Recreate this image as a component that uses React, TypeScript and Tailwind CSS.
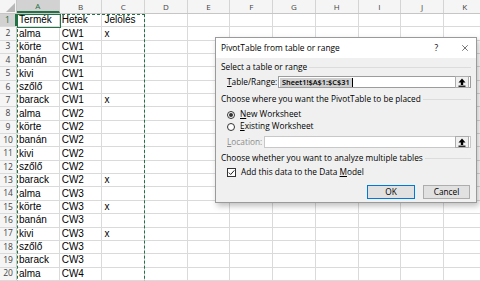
import { X } from "lucide-react";

const cols = ["A", "B", "C", "D", "E", "F", "G", "H", "I", "J", "K"];

const rows: [string, string, string][] = [
  ["Termék", "Hetek", "Jelölés"],
  ["alma", "CW1", "x"],
  ["körte", "CW1", ""],
  ["banán", "CW1", ""],
  ["kivi", "CW1", ""],
  ["szőlő", "CW1", ""],
  ["barack", "CW1", "x"],
  ["alma", "CW2", ""],
  ["körte", "CW2", ""],
  ["banán", "CW2", ""],
  ["kivi", "CW2", ""],
  ["szőlő", "CW2", ""],
  ["barack", "CW2", "x"],
  ["alma", "CW3", ""],
  ["körte", "CW3", "x"],
  ["banán", "CW3", ""],
  ["kivi", "CW3", "x"],
  ["szőlő", "CW3", ""],
  ["barack", "CW3", ""],
  ["alma", "CW4", ""],
];

function UpArrowButton() {
  return (
    <div className="w-[14px] h-[12px] border border-[#adadad] bg-[#f0f0f0] flex items-center justify-center">
      <svg width="8" height="9" viewBox="0 0 8 9">
        <path d="M4 0.5 L7.5 4.5 L5.2 4.5 L5.2 7 L2.8 7 L2.8 4.5 L0.5 4.5 Z" fill="#000" />
        <rect x="0.5" y="7.6" width="7" height="1.2" fill="#000" />
      </svg>
    </div>
  );
}

function Dialog() {
  return (
    <div className="absolute left-[215px] top-[37px] w-[262px] h-[166px] border border-[#9a9a9a] bg-[#f0f0f0] shadow-[2px_3px_6px_rgba(0,0,0,0.25)] font-['Open_Sans',sans-serif] text-[8.3px] text-black flex flex-col">
      <div className="h-[20px] bg-white flex items-center pl-[5px] pr-[6px] shrink-0">
        <span className="text-[8.4px]">PivotTable from table or range</span>
        <span className="ml-auto text-[8.4px] mr-[22px]">?</span>
        <X className="w-[10px] h-[10px]" strokeWidth={1.3} />
      </div>
      <div className="flex flex-col px-[5px] pt-[4px]">
        <div className="flex items-center gap-[2px] h-[10px]">
          <span>Select a table or range</span>
          <div className="flex-1 h-px bg-[#dcdcdc]" />
        </div>
        <div className="flex items-center mt-[4px] pl-[6px] h-[12px]">
          <span className="w-[51px]"><u>T</u>able/Range:</span>
          <div className="flex-1 h-[12px] bg-white border border-[#9c9c9c] flex items-center pl-[1px] pr-[1px]">
            <span className="bg-[#cfcfcf] px-[2px] font-semibold text-[7.4px] leading-[9px]">Sheet1!$A$1:$C$31</span>
            <span className="w-px h-[9px] bg-black" />
            <div className="ml-auto"><UpArrowButton /></div>
          </div>
        </div>
        <div className="flex items-center gap-[2px] h-[10px] mt-[6px]">
          <span>Choose where you want the PivotTable to be placed</span>
          <div className="flex-1 h-px bg-[#dcdcdc]" />
        </div>
        <div className="flex items-center gap-[5px] mt-[5px] pl-[6px] h-[11px]">
          <div className="w-[8px] h-[8px] rounded-full border border-[#333] bg-white flex items-center justify-center">
            <div className="w-[4px] h-[4px] rounded-full bg-[#333]" />
          </div>
          <span><u>N</u>ew Worksheet</span>
        </div>
        <div className="flex items-center gap-[5px] mt-[1px] pl-[6px] h-[11px]">
          <div className="w-[8px] h-[8px] rounded-full border border-[#333] bg-white" />
          <span><u>E</u>xisting Worksheet</span>
        </div>
        <div className="flex items-center mt-[4px] pl-[6px] h-[12px]">
          <span className="w-[37px] text-[#8d8d8d]"><u>L</u>ocation:</span>
          <div className="flex-1 h-[12px] bg-white border border-[#c8c8c8] flex items-center pr-[1px]">
            <div className="ml-auto"><UpArrowButton /></div>
          </div>
        </div>
        <div className="flex items-center gap-[2px] h-[10px] mt-[5px]">
          <span>Choose whether you want to analyze multiple tables</span>
          <div className="flex-1 h-px bg-[#dcdcdc]" />
        </div>
        <div className="flex items-center gap-[5px] mt-[4px] pl-[6px] h-[11px]">
          <div className="w-[9px] h-[9px] border border-[#333] bg-white flex items-center justify-center">
            <svg width="7" height="7" viewBox="0 0 7 7">
              <path d="M0.8 3.6 L2.7 5.5 L6.3 1.4" fill="none" stroke="#222" strokeWidth="1" />
            </svg>
          </div>
          <span>Add this data to the Data <u>M</u>odel</span>
        </div>
        <div className="flex justify-end gap-[8px] mt-[7px] pr-[1px]">
          <div className="w-[48px] h-[14px] border border-[#0078d7] bg-[#e1e1e1] flex items-center justify-center">OK</div>
          <div className="w-[47px] h-[14px] border border-[#adadad] bg-[#e1e1e1] flex items-center justify-center">Cancel</div>
        </div>
      </div>
    </div>
  );
}

export default function App() {
  return (
    <div className="relative w-[480px] h-[281px] overflow-hidden bg-white font-['Liberation_Sans',sans-serif] text-black">
      {/* column headers */}
      <div className="flex h-[14px] bg-[#f5f5f5] border-b border-[#c6c6c6]">
        <div className="w-[17px] shrink-0 border-r border-[#c6c6c6] relative">
          <svg className="absolute right-[1px] bottom-[1px]" width="9" height="9" viewBox="0 0 9 9">
            <path d="M9 0 L9 9 L0 9 Z" fill="#b8b8b8" />
          </svg>
        </div>
        {cols.map((c) => (
          <div
            key={c}
            className={`w-[42.7px] shrink-0 border-r border-[#d4d4d4] flex items-center justify-center text-[8px] font-['Open_Sans',sans-serif] ${
              c === "A" ? "bg-[#d2d2d2] text-[#1e6e3f] border-b-2 border-b-[#217346]" : "text-[#444]"
            }`}
          >
            {c}
          </div>
        ))}
      </div>
      {rows.map((r, i) => (
        <div key={i} className="flex h-[13.35px] border-b border-[#dadada]">
          <div
            className={`w-[17px] shrink-0 border-r border-[#c6c6c6] flex items-center justify-center text-[8.5px] font-['Open_Sans',sans-serif] ${
              i === 0 ? "bg-[#d2d2d2] text-[#1e6e3f] border-r-2 border-r-[#217346]" : "bg-[#f5f5f5] text-[#444]"
            }`}
          >
            {i + 1}
          </div>
          {cols.map((c, j) => (
            <div
              key={c}
              className="w-[42.7px] shrink-0 border-r border-[#dadada] flex items-center pl-[2px] text-[10px] leading-none"
            >
              {j < 3 ? r[j] : ""}
            </div>
          ))}
        </div>
      ))}
      {/* copy marquee around A:C */}
      <div className="absolute left-[17px] top-[14px] w-[128px] h-[300px] border-[1.5px] border-dashed border-[#217346] pointer-events-none" />
      {/* active cell A1 */}
      <div className="absolute left-[17px] top-[14px] w-[44px] h-[14px] border-[1.5px] border-[#217346] pointer-events-none" />
      <Dialog />
    </div>
  );
}
